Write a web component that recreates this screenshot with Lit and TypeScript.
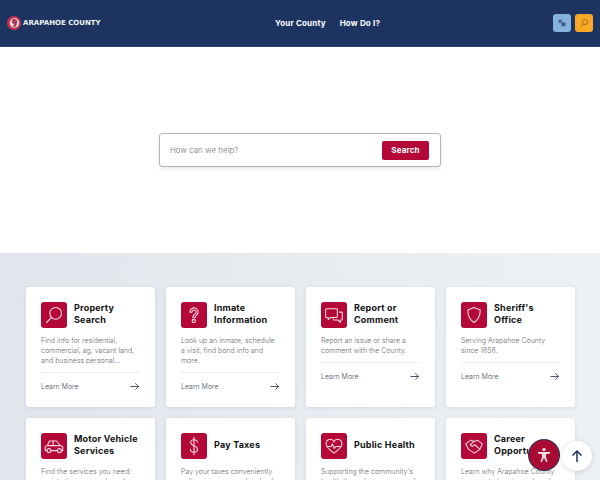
import { LitElement, html, css, svg } from "lit";
import { customElement } from "lit/decorators.js";

const I = {
  search: svg`<circle cx="14" cy="10" r="7"/><path d="M9 15 3 21"/>`,
  question: svg`<path d="M7 8.500a5 5 0 1 1 7.800 4.100c-1.300.9-1.600 1.400-1.600 2.700h-2.600c0-2.200.6-3.300 2.400-4.500a2.500 2.500 0 1 0-3.400-2.300z"/><rect x="10" y="17.500" width="3.400" height="3.400" rx=".5"/>`,
  chat: svg`<path d="M3 4.500h12a1 1 0 0 1 1 1V14a1 1 0 0 1-1 1H8l-3 2.500V15H3a1 1 0 0 1-1-1V5.500a1 1 0 0 1 1-1z"/><path d="M18.500 8.500H21a1 1 0 0 1 1 1V17a1 1 0 0 1-1 1h-1.500v2.800L16.500 18H12a1 1 0 0 1-1-1v-.5"/>`,
  shield: svg`<path d="M12 3 19.500 6c0 7.500-2 11.500-7.500 15C6.500 17.500 4.500 13.500 4.500 6z"/>`,
  car: svg`<path d="M3.500 17.500H1.500V12.500L4 11.500 6.500 6H15l4.500 5.500 3 1v5H21"/><path d="M8.500 17.500h8"/><path d="M5 11.500h14.500M11 6v5.500"/><circle cx="6" cy="17.500" r="2.400"/><circle cx="18.500" cy="17.500" r="2.400"/>`,
  dollar: svg`<path d="M16 7.500c0-2-1.800-3-4-3s-4 1.200-4 3.400c0 4.800 8.200 3 8.200 8 0 2.300-2 3.600-4.200 3.600s-4.300-1.200-4.300-3.500"/><path d="M12 1.500v21"/>`,
  heart: svg`<path d="M12 20.500C6 16.500 2.500 13 2.500 9a5 5 0 0 1 9.500-2.200A5 5 0 0 1 21.500 9c0 4-3.500 7.500-9.500 11.500z"/><path d="M4 12.500H8.500l1.500-3 2.500 5.500 1.500-2.500h6"/>`,
  hands: svg`<path d="M2 9.500 8.500 5l3.500 1.500L16 5l6 4.500-3 6.500-6.500 4.500-7-4.500z"/><path d="M12 6.500 7.500 10.500l2.500 2 3-2 5.500 5"/>`,
};

const cards = [
  ["search", "Property Search", "Find info for residential, commercial, ag, vacant land, and business personal..."],
  ["question", "Inmate Information", "Look up an inmate, schedule a visit, find bond info and more."],
  ["chat", "Report or Comment", "Report an issue or share a comment with the County."],
  ["shield", "Sheriff's Office", "Serving Arapahoe County since 1858."],
  ["car", "Motor Vehicle Services", "Find the services you need: registration, renewals and more for your vehicle."],
  ["dollar", "Pay Taxes", "Pay your taxes conveniently online, in person or by check."],
  ["heart", "Public Health", "Supporting the community's health through programs and services."],
  ["hands", "Career Opportunities", "Learn why Arapahoe County is a great place to work and apply."],
] as const;

@customElement("app-root")
export class AppRoot extends LitElement {
  static styles = css`
    :host { display: block; width: 600px; height: 480px; overflow: hidden; position: relative; font-family: Inter, "Noto Sans", sans-serif; background: #fff; }
    * { box-sizing: border-box; }
    header { height: 47px; background: #1d3461; border-bottom: 1px solid #2e4468; display: grid; grid-template-columns: 268px auto 1fr; align-items: center; padding: 0 7px; }
    .brand { display: flex; align-items: center; gap: 2px; }
    .seal { width: 14px; height: 14px; }
    .name { color: #f2f2f2; font: 800 7px "DejaVu Sans", sans-serif; white-space: nowrap; }
    nav { display: flex; gap: 14px; }
    nav a { color: #fff; font-size: 8px; font-weight: 700; letter-spacing: .18px; }
    .tools { display: flex; justify-content: flex-end; gap: 4px; }
    .tool { width: 18px; height: 18px; border-radius: 3px; display: flex; align-items: center; justify-content: center; }
    .tool svg { width: 10px; height: 10px; }
    .lang { background: #85b2dc; }
    .find { background: #f9a825; }
    .hero { height: 206px; display: flex; justify-content: center; padding-top: 86px; }
    .box { width: 282px; height: 34px; border: 1px solid #b5b5b5; border-radius: 3px; box-shadow: 0 2px 5px rgba(0,0,0,.1); display: flex; align-items: center; justify-content: space-between; padding: 0 11px 0 10px; background: #fff; }
    .ph { font-size: 7.800px; font-weight: 300; color: #707070; letter-spacing: .1px; }
    .btn { width: 47px; height: 19px; border-radius: 2px; background: #b30838; color: #fff; font-size: 8px; font-weight: 700; display: flex; align-items: center; justify-content: center; letter-spacing: .15px; }
    .section { height: 227px; background: linear-gradient(100deg, #e2e6ec, #eef1f4); padding: 34px 25px 0 26px; overflow: hidden; }
    .grid { display: grid; grid-template-columns: repeat(4, 129px); gap: 11px; }
    .card { height: 120px; background: #fff; border-radius: 3px; box-shadow: 0 1px 4px rgba(30,50,80,.1); padding: 15px 15px 0 15px; display: flex; flex-direction: column; }
    .top { display: flex; align-items: center; gap: 7px; height: 26px; }
    .icon { width: 26px; height: 26px; border-radius: 3px; background: #b30838; flex: none; display: flex; align-items: center; justify-content: center; }
    .icon svg { width: 20px; height: 20px; fill: none; stroke: #f8d7e0; stroke-width: 1.300; stroke-linejoin: round; stroke-linecap: round; }
    h3 { margin: 0 0 2px; font-size: 9px; line-height: 12.500px; font-weight: 700; color: #111; letter-spacing: .2px; }
    p { margin: 8px 0 0; font-size: 7px; line-height: 10px; font-weight: 300; color: #6d6f74; }
    .foot { margin-top: 6px; border-top: 1px solid #eeeeee; display: flex; justify-content: space-between; align-items: center; height: 27px; }
    .foot span { font-size: 7px; font-weight: 300; color: #4a5268; }
    .foot svg { width: 9px; height: 9px; margin-right: 1px; fill: none; stroke: #39435c; stroke-width: 1; }
    .round { position: absolute; border-radius: 50%; display: flex; align-items: center; justify-content: center; }
    .a11y { left: 529px; top: 440px; width: 30px; height: 30px; background: #a80c34; box-shadow: 0 0 0 1px #2a2f4a; }
    .top-btn { left: 562px; top: 441px; width: 30px; height: 30px; background: #fff; box-shadow: 0 1px 5px rgba(0,0,0,.15); }
  `;
  render() {
    return html`
      <header>
        <div class="brand">
          <svg class="seal" viewBox="0 0 14 14"><circle cx="7" cy="7" r="7" fill="#c9304f"/><circle cx="7.500" cy="7" r="4.700" fill="#f3dfe0"/><path d="M5.500 3.200c3-1 5.500 1 4.500 4l-1 3.300-3 .5 1-3-2.200-1z" fill="#a83a50"/></svg>
          <span class="name">ARAPAHOE COUNTY</span>
        </div>
        <nav><a>Your County</a><a>How Do I?</a></nav>
        <div class="tools">
          <span class="tool lang"><svg viewBox="0 0 10 10" fill="#4a6a98"><rect x="1.500" y="1.500" width="3.500" height="3.500" rx=".6"/><rect x="4.500" y="4.500" width="3.800" height="3.800" rx=".6" fill="#3a5583"/></svg></span>
          <span class="tool find"><svg viewBox="0 0 10 10" fill="none" stroke="#8a6a20" stroke-width=".8"><circle cx="6" cy="4" r="2.600"/><path d="M4 6 1.500 8.500"/></svg></span>
        </div>
      </header>
      <div class="hero">
        <div class="box"><span class="ph">How can we help?</span><span class="btn">Search</span></div>
      </div>
      <div class="section">
        <div class="grid">
          ${cards.map(([ic, t, d]) => html`
            <div class="card">
              <div class="top">
                <span class="icon"><svg viewBox="0 0 24 24">${I[ic]}</svg></span>
                <h3>${t}</h3>
              </div>
              <p>${d}</p>
              <div class="foot"><span>Learn More</span><svg viewBox="0 0 10 10"><path d="M.5 5h9M6 1.500 9.500 5 6 8.500"/></svg></div>
            </div>`)}
        </div>
      </div>
      <div class="round a11y"><svg width="16" height="16" viewBox="0 0 16 16" fill="#f6dfe4"><circle cx="8" cy="2.600" r="1.700"/><path d="M2 5h12v1.500l-4 .8v2.700l1.500 5H10L8 10.500 6 15H4.500L6 10V7.300l-4-.8z"/></svg></div>
      <div class="round top-btn"><svg width="14" height="14" viewBox="0 0 14 14" fill="none" stroke="#1d3461" stroke-width="1.500"><path d="M7 13V2M2.500 6.500 7 2l4.500 4.500"/></svg></div>
    `;
  }
}
